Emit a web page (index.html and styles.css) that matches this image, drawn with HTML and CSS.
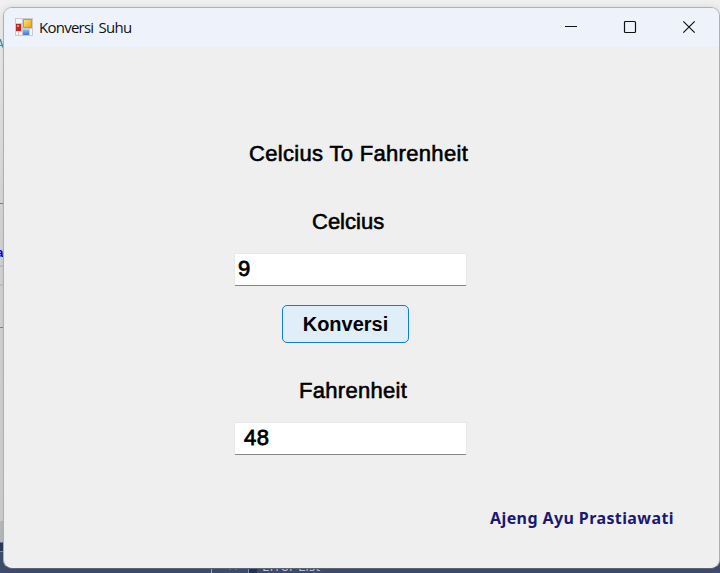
FILE: index.html
```html
<!DOCTYPE html>
<html lang="id">
<head>
<meta charset="utf-8">
<title>Konversi Suhu</title>
<link rel="stylesheet" href="styles.css">
</head>
<body>
<div class="desktop">
  <div class="editor">
    <div class="row row-top"></div>
    <div class="row row-code">A</div>
    <div class="row row-line"></div>
    <div class="row row-keyword">a</div>
    <div class="row row-current"></div>
    <div class="row row-gap"></div>
    <div class="row row-rest"></div>
    <div class="row row-scroll"></div>
  </div>
  <div class="dock">
    <div class="dock-split"></div>
    <div class="dock-tabs">
      <span class="tab tab-close">✕</span>
      <span class="tab tab-errors">Error List</span>
    </div>
  </div>
</div>
<main class="window">
  <header class="titlebar">
    <svg class="app-icon" width="18" height="18" viewBox="0 0 18 18">
      <defs>
        <linearGradient id="gold" x2="1" y2="1"><stop stop-color="#ffe68a"/><stop offset="1" stop-color="#e5a500"/></linearGradient>
        <linearGradient id="blue" x2="0" y2="1"><stop stop-color="#82b5f6"/><stop offset="1" stop-color="#3d75d7"/></linearGradient>
      </defs>
      <path fill="#c9cbce" d="M0 0h18v18H0z"/>
      <path fill="#f3f5f8" d="M1 1h6v4H1zM1 14h2v3H1zM4 14h3v3H4zM15 11h2v6h-2z"/>
      <path fill="#bd2921" d="M1 6h5v7H1z"/>
      <path fill="#e88b83" d="M2 7h2v2H2z"/>
      <path fill="url(#gold)" stroke="#c99a2c" stroke-width="1" d="M8.500 1.500h8v8h-8z"/>
      <path fill="url(#blue)" d="M8 12h6v5H8z"/>
    </svg>
    <h1 class="title">Konversi Suhu</h1>
    <div class="controls">
      <svg width="14" height="14" viewBox="0 0 14 14"><path d="M1 6.500h12"/></svg>
      <svg width="14" height="14" viewBox="0 0 14 14"><rect x="1.500" y="1.500" width="11" height="11" rx="1"/></svg>
      <svg width="14" height="14" viewBox="0 0 14 14"><path d="M1.300 1.300l11.400 11.400M12.700 1.300L1.300 12.700"/></svg>
    </div>
  </header>
  <section class="form">
    <h2 class="label heading">Celcius To Fahrenheit</h2>
    <label class="label celcius">Celcius</label>
    <div class="field field-in">9</div>
    <button class="convert">Konversi</button>
    <label class="label fahrenheit">Fahrenheit</label>
    <div class="field field-out">48</div>
    <p class="author">Ajeng Ayu Prastiawati</p>
  </section>
</main>
</body>
</html>
```
FILE: styles.css
```css
* { box-sizing: border-box; }
body {
  margin: 0;
  width: 720px;
  height: 573px;
  overflow: hidden;
  position: relative;
  font-family: "Liberation Sans", Arial, sans-serif;
}
.desktop { height: 573px; display: flex; flex-direction: column; overflow: hidden; }
.editor { height: 542px; background: linear-gradient(#f0f0f0, #e4e4e4 100px, #d5d5d5 230px, #cfcfcf); }
.row { overflow: hidden; white-space: nowrap; font: 13px/14px "Liberation Mono", monospace; }
.row-top { height: 38px; }
.row-code { height: 14px; color: #2b91af; text-indent: -4px; }
.row-line { height: 152px; border-bottom: 1px solid #858585; }
.row-keyword { height: 61px; padding-top: 43px; color: #0000e8; text-indent: -4px; font-weight: bold; }
.row-current { height: 21px; border-top: 2px solid #c4c4c4; border-bottom: 2px solid #c4c4c4; }
.row-gap { height: 42px; border-bottom: 1px solid #858585; }
.row-rest { height: 193px; }
.row-scroll { height: 21px; background: #b9babd; }
.dock { height: 31px; background: #3f4d6c; border-top: 1px solid #66748f; }
.dock-split { height: 9px; background: #2d3a55; border-bottom: 1px solid #7d899f; }
.dock-tabs { height: 21px; padding-left: 211px; display: flex; color: #c3c8d2; }
.tab { height: 21px; overflow: visible; white-space: nowrap; font: 14px/28px "Open Sans", sans-serif; }
.tab-close { width: 38px; border-left: 1px solid #a7afbe; border-right: 1px solid #8c96a9; padding-left: 15px; color: #8993a7; }
.tab-errors { border-left: 8px solid #263450; padding-left: 5px; letter-spacing: -0.15px; }
.window {
  position: absolute;
  left: 3px;
  top: 7px;
  width: 717px;
  height: 562px;
  border: 1px solid #b0b0b0;
  border-bottom-color: #59657c;
  border-radius: 9px;
  overflow: hidden;
  background: #efefef;
  box-shadow: 0 0 7px rgba(0, 0, 0, 0.1);
}
.titlebar { height: 39px; display: flex; align-items: center; background: #eef3fb; padding: 0 0 2px 11px; }
.title { margin: 0 0 0 6px; font: 15px/20px "Open Sans", "Noto Sans", sans-serif; letter-spacing: -0.75px; word-spacing: 2px; color: #111; }
.controls { display: flex; gap: 45px; margin-left: auto; margin-right: 23px; }
.controls svg { display: block; fill: none; stroke: #111; stroke-width: 1.2; }
.form { display: flex; flex-direction: column; align-items: flex-start; padding-top: 94px; }
.label { display: block; margin: 0; font-size: 22px; line-height: 26px; font-weight: normal; color: #000; -webkit-text-stroke: 0.6px #000; white-space: nowrap; }
.heading { margin-left: 245px; letter-spacing: 0.32px; }
.celcius { margin: 42px 0 0 308px; }
.field {
  width: 233px;
  height: 33px;
  margin-left: 230px;
  border: 1px solid #e8e8e8;
  border-bottom: 1px solid #858585;
  border-radius: 2px;
  background: #fff;
  font-size: 22px;
  line-height: 30px;
  -webkit-text-stroke: 0.8px #000;
}
.field-in { margin-top: 18px; padding-left: 3px; }
.convert {
  width: 127px;
  height: 38px;
  margin: 19px 0 0 278px;
  padding: 0;
  border: 1px solid #0f7ed5;
  border-radius: 5px;
  background: #e0eef9;
  color: #000;
  font: bold 20px/36px "Liberation Sans", Arial, sans-serif;
}
.fahrenheit { margin: 35px 0 0 295px; letter-spacing: 0.3px; }
.field-out { margin-top: 18px; padding-left: 9px; letter-spacing: 0.5px; }
.author { margin: 51px 0 0 486px; font: bold 16px/24px "Noto Sans", sans-serif; letter-spacing: 0.4px; color: #1b1874; white-space: nowrap; }
```
